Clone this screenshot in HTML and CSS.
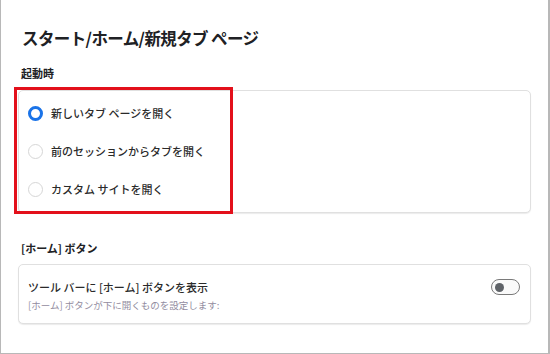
FILE: index.html
```html
<!DOCTYPE html>
<html lang="ja">
<head>
<meta charset="utf-8">
<link rel="stylesheet" href="styles.css">
</head>
<body>
<div class="page">
  <h1 class="title">スタート/ホーム/新規タブ ページ</h1>
  <h2 class="section">起動時</h2>
  <div class="card options">
    <div class="opt"><span class="radio on"></span><span>新しいタブ ページを開く</span></div>
    <div class="opt"><span class="radio"></span><span>前のセッションからタブを開く</span></div>
    <div class="opt"><span class="radio"></span><span>カスタム サイトを開く</span></div>
    <div class="highlight"></div>
  </div>
  <h2 class="section section2">[ホーム] ボタン</h2>
  <div class="card home">
    <div class="home-text">
      <div class="home-title">ツール バーに [ホーム] ボタンを表示</div>
      <div class="home-sub">[ホーム] ボタンが下に開くものを設定します:</div>
    </div>
    <div class="toggle"><span class="knob"></span></div>
  </div>
</div>
</body>
</html>
```

FILE: styles.css
```css
html, body {
  margin: 0;
  padding: 0;
  background: #fff;
}
body {
  font-family: "Noto Sans CJK JP", "Noto Sans", sans-serif;
  color: #202124;
}
.page {
  box-sizing: border-box;
  width: 550px;
  height: 354px;
  border-left: 1px solid #b8b8b8;
  border-right: 2px solid #b8b8b8;
  border-bottom: 1px solid #b8b8b8;
  padding: 26px 17px 0 17px;
}
.title {
  margin: 0 0 0 4px;
  font-size: 16.5px;
  line-height: 24px;
  font-weight: 700;
  color: #202124;
  letter-spacing: -0.6px;
}
.section {
  margin: 15px 0 9px 3px;
  font-size: 11px;
  line-height: 16px;
  font-weight: 700;
  color: #202124;
}
.section2 {
  margin-top: 27px;
  margin-bottom: 8px;
}
.card {
  border: 1px solid #e0e0e0;
  border-radius: 5px;
  box-shadow: 0 1px 1px rgba(0,0,0,0.08);
  background: #fff;
}
.options {
  position: relative;
  padding: 3px 0 4px 9px;
}
.opt {
  height: 38px;
  display: flex;
  align-items: center;
  gap: 8px;
  font-size: 11px;
  font-weight: 500;
  color: #2a2a2a;
}
.radio {
  box-sizing: border-box;
  width: 15px;
  height: 15px;
  border-radius: 50%;
  border: 1.5px solid #d6d6d6;
  flex: none;
}
.radio.on {
  border: 3.5px solid #1a73e8;
}
.highlight {
  position: absolute;
  box-sizing: border-box;
  left: -5px;
  top: -4px;
  width: 219px;
  height: 127px;
  border: 3px solid #e3101b;
}
.home {
  display: flex;
  justify-content: space-between;
  align-items: flex-start;
  padding: 14px 10px 11px 9px;
}
.home-title {
  font-size: 11px;
  line-height: 16px;
  font-weight: 500;
  color: #2a2a2a;
}
.home-sub {
  margin-top: 3px;
  font-size: 9.5px;
  line-height: 14px;
  color: #928ca0;
}
.toggle {
  box-sizing: border-box;
  width: 29px;
  height: 16px;
  border: 1.5px solid #7a7a7a;
  border-radius: 8px;
  background: #fafafa;
  display: flex;
  align-items: center;
  padding-left: 3px;
}
.knob {
  width: 9px;
  height: 9px;
  border-radius: 50%;
  background: #5f6368;
}
```
